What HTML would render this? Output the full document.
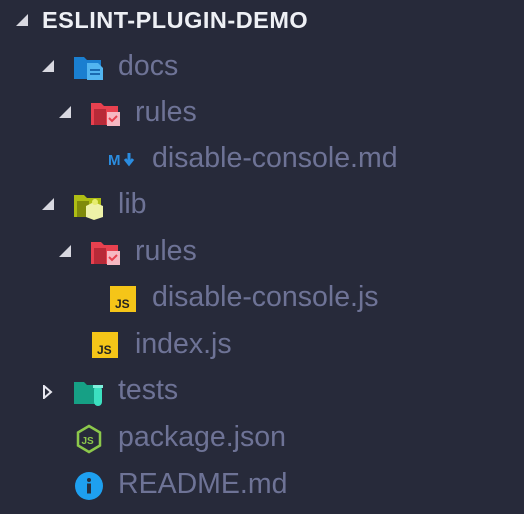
<!DOCTYPE html><html><head><style>
body{margin:0;width:524px;height:514px;background:#272a3a;font-family:"Liberation Sans",sans-serif;overflow:hidden;position:relative}
.r{position:absolute;left:0;height:40px;line-height:40px;font-size:28.5px;color:#6e7396;white-space:nowrap}
.tri{position:absolute;width:0;height:0;border-left:12px solid transparent;border-bottom:12px solid #d8d8e0}
svg{position:absolute}
</style></head><body>
<div class="tri" style="left:16px;top:14px"></div>
<div class="r" style="top:0;left:42px;color:#eef0f5;font-weight:bold;font-size:23.5px;letter-spacing:0.5px">ESLINT-PLUGIN-DEMO</div>

<div class="tri" style="left:42px;top:60px"></div>
<svg style="left:74px;top:55px" width="32" height="26" viewBox="0 0 32 26"><path d="M0 2h10l3 3h14v19H0z" fill="#1a7fd0"/><path d="M13 8h11l5 5v12H13z" fill="#52b5f0"/><path d="M16 15h10M16 19h10" stroke="#1a6ab0" stroke-width="2"/></svg>
<div class="r" style="top:46px;left:118px">docs</div>

<div class="tri" style="left:59px;top:106px"></div>
<svg style="left:91px;top:101px" width="32" height="26" viewBox="0 0 32 26"><path d="M0 2h10l3 3h14v19H0z" fill="#e8414f"/><path d="M3 8h12v16H3z" fill="#b82a38"/><path d="M16 11h13v14H16z" fill="#f6b8c2"/><path d="M18 17l3 3 5-5" stroke="#e8414f" stroke-width="2" fill="none"/></svg>
<div class="r" style="top:92px;left:135px">rules</div>

<svg style="left:108px;top:150px" width="30" height="18" viewBox="0 0 30 18"><text x="0" y="15" font-family="Liberation Sans" font-weight="bold" font-size="15" fill="#2b8de0">M</text><path d="M21 3v10M17 9l4 5 4-5" stroke="#2b8de0" stroke-width="3" fill="none"/></svg>
<div class="r" style="top:138px;left:152px">disable-console.md</div>

<div class="tri" style="left:42px;top:198px"></div>
<svg style="left:74px;top:193px" width="32" height="28" viewBox="0 0 32 28"><path d="M0 2h10l3 3h14v19H0z" fill="#aebd14"/><path d="M3 8h12v16H3z" fill="#7f8a0a"/><path d="M12 13l8-4 9 4v11l-9 3-8-3z" fill="#eef2a8"/><circle cx="21" cy="9" r="3" fill="#e6ed6f"/></svg>
<div class="r" style="top:184px;left:118px">lib</div>

<div class="tri" style="left:59px;top:245px"></div>
<svg style="left:91px;top:240px" width="32" height="26" viewBox="0 0 32 26"><path d="M0 2h10l3 3h14v19H0z" fill="#e8414f"/><path d="M3 8h12v16H3z" fill="#b82a38"/><path d="M16 11h13v14H16z" fill="#f6b8c2"/><path d="M18 17l3 3 5-5" stroke="#e8414f" stroke-width="2" fill="none"/></svg>
<div class="r" style="top:231px;left:135px">rules</div>

<svg style="left:110px;top:286px" width="26" height="26" viewBox="0 0 26 26"><rect width="26" height="26" fill="#f5c518"/><text x="5" y="22" font-family="Liberation Sans" font-weight="bold" font-size="12" fill="#222">JS</text></svg>
<div class="r" style="top:277px;left:152px">disable-console.js</div>

<svg style="left:92px;top:332px" width="26" height="26" viewBox="0 0 26 26"><rect width="26" height="26" fill="#f5c518"/><text x="5" y="22" font-family="Liberation Sans" font-weight="bold" font-size="12" fill="#222">JS</text></svg>
<div class="r" style="top:324px;left:135px">index.js</div>

<svg style="left:43px;top:385px" width="10" height="14" viewBox="0 0 10 14"><path d="M1 1l7 6-7 6z" fill="none" stroke="#e8e8f0" stroke-width="2"/></svg>
<svg style="left:74px;top:380px" width="30" height="28" viewBox="0 0 30 28"><path d="M0 2h10l3 3h14v19H0z" fill="#16a085"/><rect x="20" y="6" width="8" height="20" rx="4" fill="#3ce0c0"/><rect x="19" y="5" width="10" height="3" fill="#7ff0dc"/></svg>
<div class="r" style="top:370px;left:118px">tests</div>

<svg style="left:75px;top:424px" width="28" height="30" viewBox="0 0 28 30"><path d="M14 2l11 6.5v13L14 28 3 21.5v-13z" fill="none" stroke="#8cc84b" stroke-width="2.5"/><text x="6.5" y="20" font-family="Liberation Sans" font-weight="bold" font-size="10" fill="#8cc84b">JS</text></svg>
<div class="r" style="top:417px;left:118px">package.json</div>

<svg style="left:74px;top:471px" width="30" height="30" viewBox="0 0 30 30"><circle cx="15" cy="15" r="14" fill="#1ea0f0"/><circle cx="15" cy="9" r="2" fill="#263040"/><rect x="13" y="12.5" width="4" height="10" fill="#263040"/></svg>
<div class="r" style="top:464px;left:118px">README.md</div>
</body></html>
